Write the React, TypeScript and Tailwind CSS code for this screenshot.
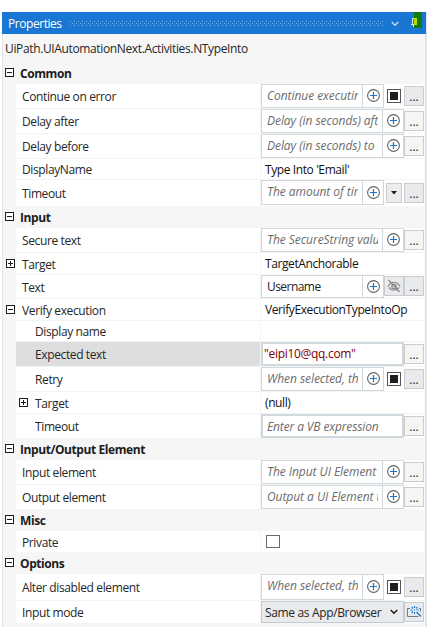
import type { ReactNode } from "react";

const dots = "...";

function Toggle({ open, className = "" }: { open?: boolean; className?: string }) {
  return (
    <svg width="9" height="9" viewBox="0 0 9 9" shapeRendering="crispEdges" className={`shrink-0 ${className}`}>
      <rect x="0.5" y="0.5" width="8" height="8" fill="#fff" stroke="#1c1c1c" />
      <path d={open ? "M2 4.5h5" : "M2 4.5h5M4.5 2v5"} stroke="#1c1c1c" />
    </svg>
  );
}

function Plus() {
  return (
    <svg width="13" height="13" viewBox="0 0 13 13" fill="none" className="-mt-px ml-px shrink-0">
      <circle cx="6.5" cy="6.5" r="5.9" stroke="#5f6366" strokeWidth="1.1" />
      <path d="M6.5 3v7M3 6.5h7" stroke="#1976d2" strokeWidth="1.2" />
    </svg>
  );
}

function More({ shade = "bg-[#f5f5f5]", className = "mt-0.5" }: { shade?: string; className?: string }) {
  return (
    <button className={`h-5 w-5 shrink-0 border border-[#c9cdd0] text-center text-[12px] leading-[19px] text-[#222] ${shade} ${className}`}>
      {dots}
    </button>
  );
}

function Field({ text, narrow, plain, h = "h-6" }: { text: string; narrow?: boolean; plain?: boolean; h?: string }) {
  return (
    <div className={`flex shrink-0 border border-[#cfd8dc] bg-white ${h} ${narrow ? "w-[123px]" : "w-[143px]"}`}>
      <div className="min-w-0 flex-1 pt-[3px] pl-[5px]">
        <div className={`overflow-hidden whitespace-nowrap ${narrow ? "w-[91px]" : "w-[111px]"} ${plain ? "text-[#222] tracking-[-0.55px]" : "text-[#6c6c6c] italic tracking-[-0.05px]"}`}>
          {text}
        </div>
      </div>
      <div className="flex w-[21px] items-center justify-center border-l border-[#cfd8dc]">
        <Plus />
      </div>
    </div>
  );
}

function Square({ className = "mt-[5px]" }: { className?: string }) {
  return (
    <div className={`mr-[3px] ml-[3px] flex h-3.5 w-3.5 shrink-0 items-center justify-center border border-[#555] bg-white ${className}`}>
      <div className="h-2 w-2 bg-[#1e1e1e]" />
    </div>
  );
}

function Header({ title }: { title: string }) {
  return (
    <div className="flex h-[22px] pl-[2px]">
      <Toggle open className="mt-1.5" />
      <div className="ml-[6px] pt-1 font-bold whitespace-nowrap tracking-[-0.42px] text-[#1c1c1c]">{title}</div>
    </div>
  );
}

interface RowProps {
  label: string;
  h?: string;
  pt?: string;
  toggle?: "open" | "closed";
  nested?: boolean;
  selected?: boolean;
  last?: boolean;
  children?: ReactNode;
}

function Row({ label, h = "h-[25px]", pt = "pt-[5px]", toggle, nested, selected, last, children }: RowProps) {
  const line = last ? "" : "border-b border-b-[#f4f4f4]";
  return (
    <div className={`flex ${h}`}>
      <div className="w-[13px] shrink-0 pl-[3px]">{toggle && !nested && <Toggle open={toggle === "open"} className="mt-[6px]" />}</div>
      <div className={`flex w-[244px] shrink-0 ${selected ? "bg-[#dedede]" : "bg-white"} ${line}`}>
        <div className={`shrink-0 ${nested ? "w-[19px] pl-[3px]" : "w-1.5"}`}>{nested && toggle && <Toggle className="mt-[6px]" />}</div>
        <div className={`whitespace-nowrap tracking-[-0.38px] ${pt}`}>{label}</div>
      </div>
      <div className={`flex w-[164px] shrink-0 items-start border-l border-l-[#f4f4f4] bg-white ${line}`}>{children}</div>
    </div>
  );
}

function Value({ children }: { children: ReactNode }) {
  return <div className="pt-[3px] pl-1 whitespace-nowrap tracking-[-0.4px] text-[#111]">{children}</div>;
}

function WideField({ children, className }: { children: ReactNode; className: string }) {
  return <div className={`h-6 w-[143px] shrink-0 border-2 border-[#cfd8dc] bg-white whitespace-nowrap ${className}`}>{children}</div>;
}

export default function App() {
  return (
    <div className="h-[627px] w-[428px] overflow-hidden bg-white pt-3 pl-0.5 font-['Open_Sans','Noto_Sans',sans-serif] text-[12px] leading-4 text-[#262626]">
      <div className="h-[615px] w-[425px] border-r-2 border-l border-[#e2e5e6] bg-[#f6f6f6]">
        <div className="-ml-px flex h-[22px] w-[424px] bg-[#1976d2]">
          <div className="w-[62px] shrink-0 pt-1 pl-1.5 tracking-[-0.45px] text-white">Properties</div>
          <svg width="313" height="5" className="mt-[9px] ml-1.5 shrink-0" shapeRendering="crispEdges">
            <defs>
              <pattern id="grip" width="4" height="4" patternUnits="userSpaceOnUse">
                <rect width="1" height="1" fill="#7db3e8" />
                <rect x="2" y="2" width="1" height="1" fill="#7db3e8" />
              </pattern>
            </defs>
            <rect width="313" height="5" fill="url(#grip)" />
          </svg>
          <svg width="8" height="6" viewBox="0 0 8 6" fill="none" className="mt-[9px] ml-2 shrink-0">
            <path d="M0.7 1l3.3 3.3L7.3 1" stroke="#c5dcf3" strokeWidth="1.4" />
          </svg>
          <svg width="13" height="16" viewBox="0 0 13 16" fill="none" shapeRendering="crispEdges" className="ml-2.5 shrink-0">
            <path d="M5 0h8v16H5z" fill="#107c10" />
            <path d="M3.5 12V6.5H5M2 12.500h3M4.500 12v3" stroke="#d5e6f7" />
            <path d="M5 6h2.500v6H5zM5 12h3v1H5z" fill="#b8dc00" />
          </svg>
        </div>

        <div className="h-7 pt-[7px] pl-0.5 whitespace-nowrap tracking-[-0.36px]">UiPath.UIAutomationNext.Activities.NTypeInto</div>

        <Header title="Common" />
        <Row label="Continue on error">
          <Field text="Continue executing" narrow />
          <Square />
          <More shade="bg-[#e9eaec]" />
        </Row>
        <Row label="Delay after">
          <Field text="Delay (in seconds) after" />
          <More />
        </Row>
        <Row label="Delay before">
          <Field text="Delay (in seconds) to wait" />
          <More />
        </Row>
        <Row label="DisplayName" h="h-[21px]" pt="pt-[3px]">
          <Value>Type Into 'Email'</Value>
        </Row>
        <Row label="Timeout" h="h-[26px]" pt="pt-1.5" last>
          <Field text="The amount of time" narrow h="h-[25px]" />
          <button className="mt-[3px] mr-0.5 ml-0.5 flex h-5 w-4 shrink-0 items-center justify-center border border-[#c9cdd0] bg-[#ececec]">
            <svg width="6" height="4" viewBox="0 0 6 4"><path d="M0 0h6L3 3.5z" fill="#1c1c1c" /></svg>
          </button>
          <More shade="bg-[#e9eaec]" className="mt-[3px]" />
        </Row>

        <Header title="Input" />
        <Row label="Secure text">
          <Field text="The SecureString value" />
          <More />
        </Row>
        <Row label="Target" toggle="closed" h="h-[22px]" pt="pt-1">
          <Value>TargetAnchorable</Value>
        </Row>
        <Row label="Text" h="h-6">
          <Field text="Username" narrow plain h="h-[23px]" />
          <button className="mt-px flex h-5 w-5 shrink-0 items-center justify-center border border-[#c9cdd0] bg-[#e9eaec]">
            <svg width="14" height="14" viewBox="0 0 14 14" fill="none" stroke="#858585" strokeWidth="1.2">
              <path d="M0.8 7.5Q7-1 13.2 7.500M1.800 8.500Q7 14 12.200 8.500M1.500 1l11 12" />
              <circle cx="7" cy="7.500" r="2.200" />
            </svg>
          </button>
          <More shade="bg-[#e9eaec]" className="mt-px" />
        </Row>
        <Row label="Verify execution" toggle="open" h="h-[22px]" pt="pt-1">
          <Value>VerifyExecutionTypeIntoOp</Value>
        </Row>
        <Row label="Display name" nested h="h-[21px]" pt="pt-[3px]" />
        <Row label="Expected text" nested selected>
          <WideField className="pt-0.5 pl-px tracking-[-0.3px] text-[#800000]">"eipi10@qq.com"</WideField>
          <More />
        </Row>
        <Row label="Retry" nested>
          <Field text="When selected, the" narrow />
          <Square />
          <More shade="bg-[#e9eaec]" />
        </Row>
        <Row label="Target" nested toggle="closed" h="h-[22px]" pt="pt-1">
          <Value>(null)</Value>
        </Row>
        <Row label="Timeout" nested h="h-6" last>
          <WideField className="pt-[3px] pl-1 tracking-[-0.12px] text-[#6c6c6c] italic">Enter a VB expression</WideField>
          <More />
        </Row>

        <Header title="Input/Output Element" />
        <Row label="Input element">
          <Field text="The Input UI Element" />
          <More />
        </Row>
        <Row label="Output element" h="h-6" last>
          <Field text="Output a UI Element to" />
          <More />
        </Row>

        <Header title="Misc" />
        <Row label="Private" h="h-[21px]" pt="pt-1" last>
          <div className="mt-1 ml-[5px] h-[13px] w-3.5 border border-[#6a6a6a] bg-white" />
        </Row>

        <Header title="Options" />
        <Row label="Alter disabled element" h="h-[27px]" pt="pt-1.5">
          <Field text="When selected, the" narrow h="h-[26px]" />
          <Square className="mt-1.5" />
          <More shade="bg-[#e9eaec]" className="mt-[3px]" />
        </Row>
        <Row label="Input mode" h="h-[22px]" pt="pt-1" last>
          <div className="flex h-[22px] w-[143px] shrink-0 items-center justify-between border border-[#c3cbd3] bg-[#e9eaec] pr-[5px] pl-[3px] whitespace-nowrap tracking-[-0.35px]">
            <span className="pt-px">Same as App/Browser</span>
            <svg width="8" height="6" viewBox="0 0 8 6" fill="none"><path d="M0.7 1L4 4.3 7.3 1" stroke="#1c1c1c" strokeWidth="1.5" /></svg>
          </div>
          <button className="mt-px flex h-5 w-5 shrink-0 items-center justify-center border border-[#c3cbd3] bg-[#e9eaec]">
            <svg width="16" height="14" viewBox="0 0 16 14" fill="none">
              <path d="M4 3.5H1.500v8h11M13 3.500h1.500v3" stroke="#6f7a83" />
              <path d="M8.500 1v2M8.500 7v2M4.500 5h2M10.500 5h2M5.700 2.200l1.300 1.300M11.300 2.200L10 3.500M5.700 7.800L7 6.500M8 5h1" stroke="#1976d2" strokeWidth="1.200" />
              <path d="M10.500 7l4.500 4.500" stroke="#1976d2" strokeWidth="1.300" />
            </svg>
          </button>
        </Row>
      </div>
    </div>
  );
}
